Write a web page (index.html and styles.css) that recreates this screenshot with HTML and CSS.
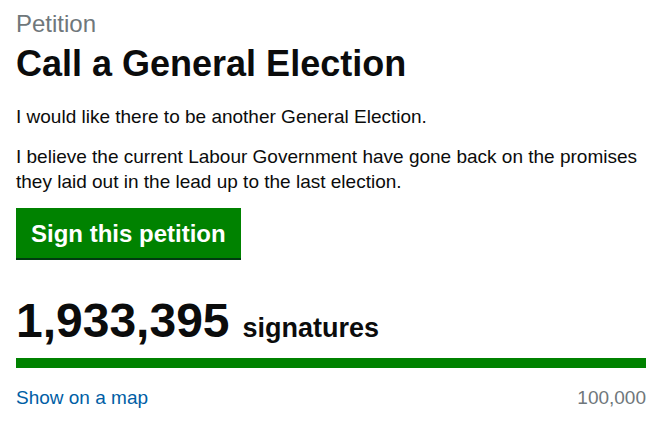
FILE: index.html
```html
<!DOCTYPE html>
<html lang="en">
<head>
<meta charset="utf-8">
<title>Call a General Election</title>
<link rel="stylesheet" href="styles.css">
</head>
<body>
<main class="petition">
  <span class="caption">Petition</span>
  <h1 class="title">Call a General Election</h1>
  <p class="body-text first">I would like there to be another General Election.</p>
  <p class="body-text">I believe the current Labour Government have gone back on the promises they laid out in the lead up to the last election.</p>
  <div class="actions">
    <a class="button" href="#">Sign this petition</a>
  </div>
  <div class="count">
    <span class="count-number">1,933,395</span>
    <span class="count-label">signatures</span>
  </div>
  <div class="progress"><div class="progress-bar" style="width:100%"></div></div>
  <div class="meta">
    <a class="map-link" href="#">Show on a map</a>
    <span class="threshold">100,000</span>
  </div>
</main>
</body>
</html>
```

FILE: styles.css
```css
html, body {
  margin: 0;
  padding: 0;
  background: #ffffff;
}

body {
  font-family: "Liberation Sans", Arial, sans-serif;
  color: #0b0c0c;
}

.petition {
  display: flex;
  flex-direction: column;
  padding: 9px 14px 0 16px;
}

.caption {
  display: block;
  font-size: 24px;
  line-height: 30px;
  color: #6f777b;
}

.title {
  margin: 5px 0 0;
  font-size: 36px;
  line-height: 40px;
  font-weight: bold;
}

.body-text {
  margin: 15px 0 0;
  font-size: 19px;
  line-height: 25px;
}

.body-text.first {
  margin-top: 20px;
}

.actions {
  display: flex;
  margin-top: 13.5px;
}

.button {
  display: inline-block;
  background: #008200;
  color: #ffffff;
  text-decoration: none;
  font-weight: bold;
  font-size: 24px;
  line-height: 30px;
  padding: 11px 15px 9px;
  box-shadow: 0 2px 0 #003a10;
}

.count {
  display: flex;
  align-items: baseline;
  gap: 13px;
  margin-top: 39.7px;
}

.count-number {
  font-size: 48px;
  line-height: 48px;
  font-weight: bold;
}

.count-label {
  font-size: 27px;
  line-height: 27px;
  font-weight: bold;
}

.progress {
  margin-top: 13.3px;
  height: 10px;
  background: #dee0e2;
}

.progress-bar {
  height: 10px;
  background: #008200;
}

.meta {
  display: flex;
  justify-content: space-between;
  margin-top: 16.5px;
  font-size: 19px;
  line-height: 25px;
}

.map-link {
  color: #005ea5;
  text-decoration: none;
}

.threshold {
  color: #6f777b;
}
```
